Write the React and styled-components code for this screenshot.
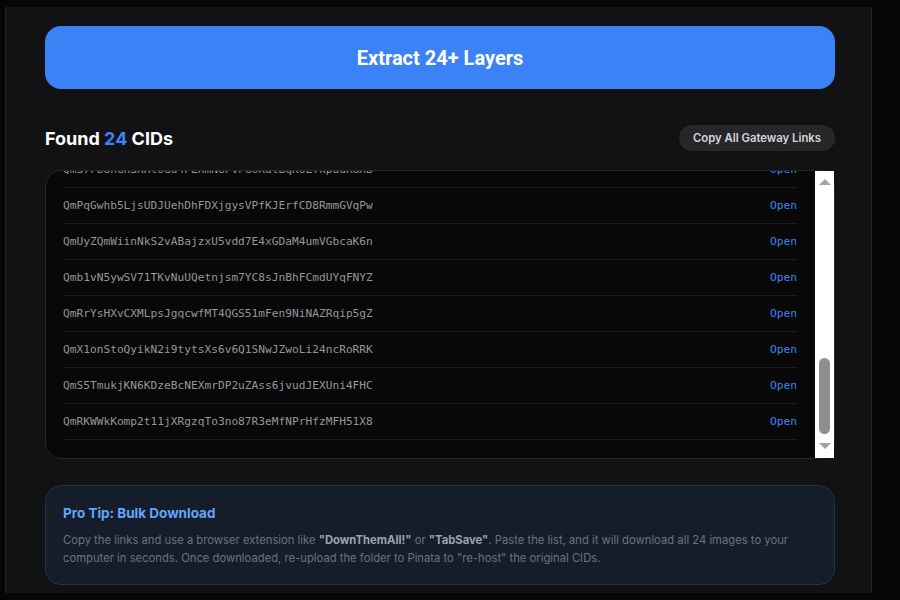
import React, { useLayoutEffect, useRef } from 'react'
import styled, { createGlobalStyle } from 'styled-components'

const GlobalStyle = createGlobalStyle`
  html, body {
    margin: 0;
    background: #060606;
    font-family: Inter, "Noto Sans", sans-serif;
  }
`;

const cids = [
  'QmZ4kTqLx8aRwN2pVh7cYbJd3sFgE9uMnK6tPoQiWrXyA1',
  'QmTg7HbN3xWq5LvKz2RdYc8mPjF4sAe6uBnXo9iQtGwVhE',
  'QmVa2WcE8rTnJ5kLq9HxZbM3pYfD7sUgN4oKiR6tBwXjPe',
  'QmN8dRfK2tYw6QzLx4VbHc9mJpE3sGaU7nTo5iBkXqWrZy',
  'QmYb5JhG9pXe3KrWq7LnTc2VdF8sMaZ4uRoN6iBtQwEkPx',
  'QmW3sQkN7vBxR2hYp9LcJf5TdE8mGaZ4uKoX6iPnHqVtRb',
  'QmQe9TrH4wJk2NxBv7LpYc5ZdF3sMgU8aRoK6iWnXqEtPz',
  'QmXc6LpW3rNe8TyQk2HbJv9ZdF5sMaG4uRoK7iBnYqWtEx',
  'QmUh2KjR8vPx5WnTq3LbYc7ZdF9sMeG4aNoX6iBtQwRkEz',
  'QmTf4NwB9rKx2HqYp7LcJv5ZdE3sMgU8aRoW6iPnXqKtGb',
  'QmRp8XkV3tNw6JzHq2LbYc9TdF5sMaG4uEoK7iBnWqRxPj',
  'QmZm5QhT2wRk9NxBv4LpYc7JdF3sEgU8aWoK6iHnXqVtPr',
  'QmYt3JwN7vRx2KhQp9LcBf5ZdE8mGaT4uXoW6iPnHqEtRk',
  'QmVk9TrB4wHe2NxJv7LpQc5ZdF3sMgU8aRoY6iWnXkEtPy',
  'QmPw6LhR3tNe8XyQk2JbZv9TdF5sMaG4uKoB7iHnYqWrEc',
  'QmS7FbUhGhSXRtoGd4PEXmNGFVFGoKdtBqK6ZTkpddXGXB',
  'QmPqGwhb5LjsUDJUehDhFDXjgysVPfKJErfCD8RmmGVqPw',
  'QmUyZQmWiinNkS2vABajzxU5vdd7E4xGDaM4umVGbcaK6n',
  'Qmb1vN5ywSV71TKvNuUQetnjsm7YC8sJnBhFCmdUYqFNYZ',
  'QmRrYsHXvCXMLpsJgqcwfMT4QGS51mFen9NiNAZRqip5gZ',
  'QmX1onStoQyikN2i9tytsXs6v6Q1SNwJZwoLi24ncRoRRK',
  'QmS5TmukjKN6KDzeBcNEXmrDP2uZAss6jvudJEXUni4FHC',
  'QmRKWWkKomp2t11jXRgzqTo3no87R3eMfNPrHfzMFH51X8',
]

function App() {
  const scrollRef = useRef(null)

  useLayoutEffect(() => {
    const el = scrollRef.current
    if (el) el.scrollTop = el.scrollHeight
  }, [])

  return (
    <Shell>
      <GlobalStyle />
      <Panel>
        <ExtractButton>Extract 24+ Layers</ExtractButton>

        <Header>
          <Title>Found <Count>24</Count> CIDs</Title>
          <CopyButton>Copy All Gateway Links</CopyButton>
        </Header>

        <List>
          <Scroller ref={scrollRef}>
            {cids.map((cid) => (
              <Row key={cid}>
                <Cid>{cid}</Cid>
                <OpenLink>Open</OpenLink>
              </Row>
            ))}
          </Scroller>
          <Track>
            <ArrowBox $dir="up"><Arrow $dir="up" /></ArrowBox>
            <TrackFill />
            <Thumb />
            <ArrowBox $dir="down"><Arrow $dir="down" /></ArrowBox>
          </Track>
        </List>

        <Tip>
          <TipTitle>Pro Tip: Bulk Download</TipTitle>
          <TipText>
            Copy the links and use a browser extension like <b>"DownThemAll!"</b> or <b>"TabSave"</b>. Paste the list, and it will download all 24 images to your computer in seconds. Once downloaded, re-upload the folder to Pinata to "re-host" the original CIDs.
          </TipText>
        </Tip>
      </Panel>
    </Shell>
  )
}

const Shell = styled.div`
  padding: 7px 0 0 5px;
  height: 600px;
  box-sizing: border-box;
  overflow: hidden;
`;

const Panel = styled.div`
  width: 867px;
  height: 586px;
  box-sizing: border-box;
  background: #121214;
  border-left: 1px solid #232326;
  border-right: 1px solid #232326;
  padding: 19px 36px 0 39px;
  display: flex;
  flex-direction: column;
`;

const ExtractButton = styled.button`
  height: 63px;
  border: none;
  border-radius: 16px;
  background: #3b82f6;
  color: #fff;
  font-family: Roboto, sans-serif;
  font-size: 20px;
  font-weight: 700;
  cursor: pointer;
`;

const Header = styled.div`
  margin-top: 36px;
  height: 26px;
  display: flex;
  align-items: center;
  justify-content: space-between;
`;

const Title = styled.h3`
  margin: 0;
  font-size: 18px;
  font-weight: 700;
  color: #fff;
`;

const Count = styled.span`
  color: #3b82f6;
`;

const CopyButton = styled.button`
  height: 26px;
  padding: 0 14px;
  border: none;
  border-radius: 999px;
  background: #27272a;
  color: #d4d4d8;
  font-family: Inter, sans-serif;
  font-size: 11.3px;
  font-weight: 600;
`;

const List = styled.div`
  margin-top: 19px;
  height: 289px;
  box-sizing: border-box;
  display: flex;
  background: #080808;
  border: 1px solid #26262a;
  border-radius: 16px;
`;

const Scroller = styled.div`
  flex: 1;
  min-width: 0;
  overflow: hidden;
  border-radius: 15px 0 0 15px;
  padding: 18px 18px 18px 17px;
`;

const Track = styled.div`
  width: 19px;
  flex-shrink: 0;
  background: #fff;
  display: flex;
  flex-direction: column;
  align-items: center;
`;

const ArrowBox = styled.div`
  height: 17px;
  box-sizing: border-box;
  display: flex;
  justify-content: center;
  align-items: ${(p) => (p.$dir === 'up' ? 'flex-start' : 'flex-end')};
  padding: ${(p) => (p.$dir === 'up' ? '8px 0 0' : '0 0 9px')};
`;

const Arrow = styled.div`
  width: 0;
  height: 0;
  border-left: 6.5px solid transparent;
  border-right: 6.5px solid transparent;
  border-${(p) => (p.$dir === 'up' ? 'bottom' : 'top')}: 6px solid #a3a3a3;
`;

const TrackFill = styled.div`
  flex: 1;
`;

const Thumb = styled.div`
  width: 11px;
  height: 76px;
  margin-bottom: 7px;
  border-radius: 6px;
  background: #8f8f8f;
`;

const Row = styled.div`
  height: 36px;
  box-sizing: border-box;
  border-bottom: 1px solid #1c1c1f;
  display: flex;
  align-items: center;
  justify-content: space-between;
`;

const Cid = styled.span`
  font-family: "DejaVu Sans Mono", monospace;
  font-size: 11.2px;
  color: #95959c;
`;

const OpenLink = styled.a`
  font-family: "DejaVu Sans Mono", monospace;
  font-size: 11.2px;
  color: #3b82f6;
  cursor: pointer;
`;

const Tip = styled.div`
  margin-top: 26px;
  box-sizing: border-box;
  height: 100px;
  background: #161d2a;
  border: 1px solid #1e3352;
  border-radius: 16px;
  padding: 17px 17px;
`;

const TipTitle = styled.h4`
  margin: 0;
  font-size: 13.5px;
  line-height: 20px;
  font-weight: 700;
  color: #60a5fa;
`;

const TipText = styled.p`
  margin: 8px 0 0;
  font-size: 11.25px;
  line-height: 18px;
  color: #6b7280;

  b {
    color: #9ca3af;
    font-weight: 700;
  }
`;

export default App
